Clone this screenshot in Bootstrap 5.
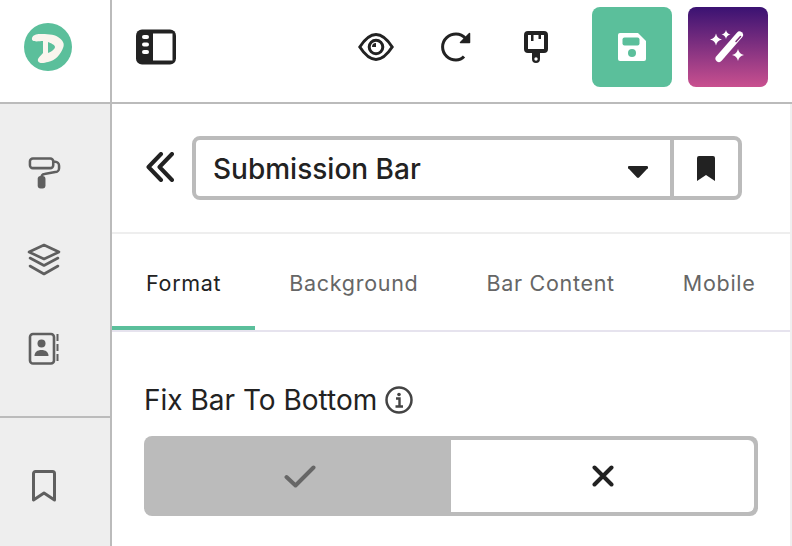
<!DOCTYPE html>
<html lang="en">
<head>
    <meta charset="UTF-8">
    <meta name="viewport" content="width=device-width, initial-scale=1.0">
    <title>Submission Bar</title>
    <link href="https://cdn.jsdelivr.net/npm/bootstrap@5.3.0/dist/css/bootstrap.min.css" rel="stylesheet">
    <style>
        html, body {
            height: 546px;
            overflow: hidden;
        }
        body {
            font-family: "Inter", "Liberation Sans", sans-serif;
            color: #222;
            background-color: #fff;
        }
        svg {
            display: block;
        }
        .top-strip {
            height: 104px;
            border-bottom: 2px solid #bbb;
        }
        .logo-cell {
            width: 112px;
            padding: 0 14px 8px 0;
            border-right: 2px solid #bbb;
        }
        .tools-cell {
            padding-bottom: 8px;
        }
        .tool-cell {
            width: 80px;
            height: 80px;
        }
        .tool-filled {
            border-radius: 8px;
        }
        .tool-save {
            background-color: #5bbf9b;
        }
        .tool-magic {
            background: linear-gradient(180deg, #3a1272 0%, #c9508f 100%);
        }
        .tool-row {
            padding-right: 24px;
        }
        .tool-row .tool-cell + .tool-filled {
            margin-left: 16px;
        }
        .side-rail {
            width: 112px;
            height: 442px;
            background-color: #eee;
            border-right: 2px solid #bbb;
        }
        .rail-group {
            padding: 24px 0;
        }
        .rail-group + .rail-group {
            border-top: 2px solid #bbb;
        }
        .rail-item {
            height: 88px;
            padding-right: 22px;
        }
        .main-panel {
            min-width: 0;
            border-right: 2px solid #f0f0f0;
        }
        .head-row {
            height: 130px;
            padding: 32px 48px 0 34px;
            border-bottom: 2px solid #eee;
        }
        .picker {
            height: 64px;
            border: 4px solid #bbb;
            border-radius: 8px;
            margin-left: 18px;
        }
        .picker-name {
            padding: 1px 22px 0 17px;
            font-size: 28px;
            font-weight: 500;
        }
        .picker-caret {
            margin-top: 6px;
        }
        .picker-save {
            width: 68px;
            border-left: 4px solid #bbb;
        }
        .tab-strip {
            height: 98px;
            border-bottom: 2px solid #e6e3ee;
        }
        .tab-strip .nav-link {
            height: 96px;
            padding: 6px 34px 0;
            font-size: 21.5px;
            letter-spacing: 0.7px;
            white-space: nowrap;
            color: #666;
            border-bottom: 4px solid transparent;
            margin-bottom: 0;
        }
        .tab-strip .nav-link.active {
            color: #222;
            border-bottom-color: #5bbf9b;
        }
        .field-block {
            padding: 50px 32px 0 32px;
        }
        .field-label {
            font-size: 28px;
            line-height: 36px;
            margin-bottom: 18px;
        }
        .switch-box {
            height: 80px;
            padding: 4px;
            background-color: #bbb;
            border-radius: 8px;
        }
        .switch-box .btn {
            border: 0;
            border-radius: 6px;
            padding: 0;
        }
        .switch-on {
            width: 303px;
            flex: none !important;
        }
        .switch-box .switch-on {
            background-color: #fff;
        }
    </style>
</head>
<body>
    <div class="top-strip d-flex">
        <div class="logo-cell d-flex align-items-center justify-content-center">
            <svg width="48" height="48" viewBox="0 0 48 48">
                <circle cx="24" cy="24" r="24" fill="#5bbf9b"/>
                <path fill="#faf5ee" fill-rule="evenodd" d="M8 15 C9 12 12 11 16 11 C22 11 30 11 34 14 C39 17 41 21 39 25 C37 31 31 38 24 39 C20 40 15 41 14 38 C13 35 17 33 19 30 L19 18 C15 18 7 20 8 15 Z M24 19 L24 30 C27 29 31 26 31 24 C31 22 27 20 24 19 Z"/>
            </svg>
        </div>
        <div class="tools-cell flex-grow-1 d-flex align-items-center">
            <svg width="40" height="36" viewBox="0 0 40 36" class="ms-4">
                <rect x="0" y="0.5" width="40" height="35" rx="6" fill="#222"/>
                <rect x="17" y="4.5" width="19.500" height="27" fill="#fff"/>
                <rect x="6" y="6" width="7" height="4" rx="2" fill="#fff"/>
                <rect x="6" y="13.5" width="7" height="4" rx="2" fill="#fff"/>
                <rect x="6" y="21" width="7" height="4" rx="2" fill="#fff"/>
            </svg>
            <div class="tool-row ms-auto d-flex">
                <div class="tool-cell d-flex align-items-center justify-content-center">
                    <svg width="36" height="28" viewBox="0 0 36 28" fill="none" stroke="#222" stroke-width="3">
                        <path d="M1.8 14 C7 6 12 1.6 18 1.6 C24 1.6 29 6 34.2 14 C29 22 24 26.4 18 26.4 C12 26.4 7 22 1.8 14 Z"/>
                        <circle cx="18" cy="14" r="6.8"/>
                        <path d="M14 14 A4 4 0 0 1 18 10 L18 14 Z" fill="#222" stroke="none"/>
                    </svg>
                </div>
                <div class="tool-cell d-flex align-items-center justify-content-center">
                    <svg width="30" height="30" viewBox="0 0 30 30" fill="none" stroke="#222" stroke-width="3">
                        <path d="M23 24.5 C20.8 27 18 28 15 28 C8 28 1.6 22.5 1.6 15 C1.6 7.5 8 2 15 2 C19 2 22 3.5 24.5 6.5"/>
                        <path d="M28.5 1.5 L28.5 10.5 L19.5 10.5 Z" fill="#222" stroke-width="1.5" stroke-linejoin="round"/>
                    </svg>
                </div>
                <div class="tool-cell d-flex align-items-center justify-content-center">
                    <svg width="24" height="32" viewBox="0 0 24 32">
                        <path fill="#222" d="M4 0 H20 A4 4 0 0 1 24 4 V18 A4 4 0 0 1 20 22 H16 V28 A4 4 0 0 1 8 28 V22 H4 A4 4 0 0 1 0 18 V4 A4 4 0 0 1 4 0 Z"/>
                        <path fill="#fff" d="M4 4 H20 V18 H4 Z"/>
                        <rect x="7" y="4" width="2.5" height="6" fill="#222"/>
                        <rect x="14.5" y="4" width="2.5" height="4" fill="#222"/>
                        <circle cx="12" cy="28" r="1.7" fill="#fff"/>
                    </svg>
                </div>
                <div class="tool-cell tool-filled tool-save d-flex align-items-center justify-content-center">
                    <svg width="28" height="28" viewBox="0 0 28 28">
                        <path fill="#fff" d="M2 0 H20 L28 8 V26 A2 2 0 0 1 26 28 H2 A2 2 0 0 1 0 26 V2 A2 2 0 0 1 2 0 Z"/>
                        <rect x="4.5" y="4.500" width="17" height="8" rx="2" fill="#5bbf9b"/>
                        <circle cx="14" cy="20" r="4" fill="#5bbf9b"/>
                    </svg>
                </div>
                <div class="tool-cell tool-filled tool-magic d-flex align-items-center justify-content-center">
                    <svg width="36" height="34" viewBox="0 0 36 34" fill="#fff">
                        <path d="M6 3.500 Q7 8.500 12 9.500 Q7 10.500 6 15.500 Q5 10.500 0 9.500 Q5 8.500 6 3.500 Z"/>
                        <path d="M16 0 Q16.800 3.700 20.500 4.500 Q16.800 5.300 16 9 Q15.200 5.300 11.500 4.500 Q15.200 3.700 16 0 Z"/>
                        <path d="M28 19 Q29 24 34 25 Q29 26 28 31 Q27 26 22 25 Q27 24 28 19 Z"/>
                        <path d="M9 28.500 L29.500 5" stroke="#fff" stroke-width="7" stroke-linecap="round" fill="none"/>
                        <path d="M26 11.500 L30.500 6.500" stroke="#7a2d78" stroke-width="1.500" stroke-linecap="round" fill="none"/>
                    </svg>
                </div>
            </div>
        </div>
    </div>
    <div class="d-flex">
        <div class="side-rail flex-shrink-0">
            <div class="rail-group">
                <div class="rail-item d-flex align-items-center justify-content-center">
                    <svg width="33" height="33" viewBox="0 0 34 33" fill="none" stroke="#5f5f5f" stroke-width="2.600">
                        <rect x="2" y="2" width="24" height="10" rx="3"/>
                        <path d="M26 5.500 H28 A4 4 0 0 1 32 9.500 V12 A4 4 0 0 1 28 16 L17 18 A3 3 0 0 0 14 21 V23"/>
                        <rect x="10" y="20" width="8" height="13" rx="3" fill="#5f5f5f" stroke="none"/>
                    </svg>
                </div>
                <div class="rail-item d-flex align-items-center justify-content-center">
                    <svg width="34" height="34" viewBox="0 0 34 34" fill="none" stroke="#5f5f5f" stroke-width="2.600" stroke-linejoin="round" stroke-linecap="round">
                        <path d="M2 9 L17 2 L32 9 L17 16 Z"/>
                        <path d="M3 15 L17 22.500 L31 15"/>
                        <path d="M3 23 L17 31 L31 23"/>
                    </svg>
                </div>
                <div class="rail-item d-flex align-items-center justify-content-center">
                    <svg width="32" height="33" viewBox="0 0 32 33">
                        <rect x="2" y="2" width="24" height="29.500" rx="3" fill="none" stroke="#5f5f5f" stroke-width="2.600"/>
                        <circle cx="13.500" cy="11.500" r="4" fill="#5f5f5f"/>
                        <path fill="#5f5f5f" d="M6.500 24 C6.500 20 9.500 18 13.500 18 C17.500 18 20.500 20 20.500 24 Z"/>
                        <rect x="28.500" y="2" width="2" height="7" fill="#5f5f5f"/>
                        <rect x="28.500" y="12" width="2" height="7" fill="#5f5f5f"/>
                        <rect x="28.500" y="22" width="2" height="7" fill="#5f5f5f"/>
                    </svg>
                </div>
            </div>
            <div class="rail-group">
                <div class="rail-item d-flex align-items-center justify-content-center">
                    <svg width="24" height="32" viewBox="0 0 24 32" fill="none" stroke="#5f5f5f" stroke-width="3" stroke-linejoin="round">
                        <path d="M1.500 30 V3.500 A2 2 0 0 1 3.500 1.500 H20.500 A2 2 0 0 1 22.500 3.500 V30 L12 23 Z"/>
                    </svg>
                </div>
            </div>
        </div>
        <div class="main-panel flex-grow-1">
            <div class="head-row d-flex align-items-start">
                <svg width="28" height="30" viewBox="0 0 28 30" fill="none" stroke="#222" stroke-width="4" stroke-linecap="round" stroke-linejoin="round" class="mt-3">
                    <path d="M15 2 L2.500 15 L15 28"/>
                    <path d="M26 2 L13.500 15 L26 28"/>
                </svg>
                <div class="picker flex-grow-1 d-flex">
                    <div class="picker-name flex-grow-1 d-flex align-items-center justify-content-between">
                        <span>Submission Bar</span>
                        <svg class="picker-caret" width="20" height="12" viewBox="0 0 20 12"><path fill="#222" d="M2 0 H18 A1.500 1.500 0 0 1 19 3 L11 11.500 A1.500 1.500 0 0 1 9 11.500 L1 3 A1.500 1.500 0 0 1 2 0 Z"/></svg>
                    </div>
                    <div class="picker-save d-flex align-items-center justify-content-center">
                        <svg width="18" height="25" viewBox="0 0 18 25"><path fill="#222" d="M2 0 H16 A2 2 0 0 1 18 2 V25 L9 19 L0 25 V2 A2 2 0 0 1 2 0 Z"/></svg>
                    </div>
                </div>
            </div>
            <ul class="nav tab-strip flex-nowrap">
                <li class="nav-item"><a class="nav-link active d-flex align-items-center" href="#">Format</a></li>
                <li class="nav-item"><a class="nav-link d-flex align-items-center" href="#">Background</a></li>
                <li class="nav-item"><a class="nav-link d-flex align-items-center" href="#">Bar Content</a></li>
                <li class="nav-item"><a class="nav-link d-flex align-items-center" href="#">Mobile</a></li>
            </ul>
            <div class="field-block">
                <div class="field-label d-flex align-items-center gap-2">
                    <span>Fix Bar To Bottom</span>
                    <svg width="28" height="28" viewBox="0 0 28 28" fill="none" stroke="#444" stroke-width="2.500">
                        <circle cx="14" cy="14" r="12.500"/>
                        <circle cx="14" cy="8.500" r="1.800" fill="#444" stroke="none"/>
                        <path d="M11 12.500 H14.500 V20 M10.500 20.500 H18" stroke-width="2.400"/>
                    </svg>
                </div>
                <div class="switch-box btn-group d-flex" role="group">
                    <button type="button" class="btn flex-grow-1 d-flex align-items-center justify-content-center">
                        <svg width="32" height="23" viewBox="0 0 32 23" fill="none" stroke="#666" stroke-width="4" stroke-linecap="round" stroke-linejoin="round">
                            <path d="M2.500 12 L11.500 20.500 L29.500 2.500"/>
                        </svg>
                    </button>
                    <button type="button" class="btn switch-on d-flex align-items-center justify-content-center">
                        <svg width="22" height="22" viewBox="0 0 22 22" fill="none" stroke="#222" stroke-width="4" stroke-linecap="round">
                            <path d="M2.500 2.500 L19.500 19.500 M19.500 2.500 L2.500 19.500"/>
                        </svg>
                    </button>
                </div>
            </div>
        </div>
    </div>
    <script src="https://cdn.jsdelivr.net/npm/bootstrap@5.3.0/dist/js/bootstrap.bundle.min.js"></script>
</body>
</html>
